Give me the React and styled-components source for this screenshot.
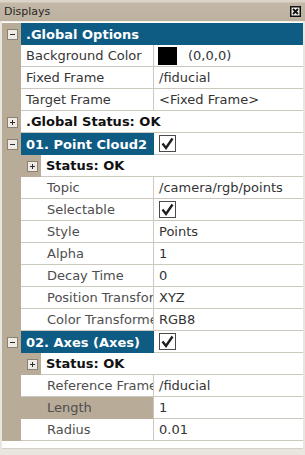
import React from 'react';
import styled, { createGlobalStyle } from 'styled-components';

const GlobalStyle = createGlobalStyle`
  html, body {
    margin: 0;
    padding: 0;
    background: #ece9e3;
  }
  body {
    font-family: "DejaVu Sans", "Liberation Sans", sans-serif;
    font-size: 13px;
  }
`;

const TAN = '#b8ab97';
const BLUE = '#0e5b83';
const GRID = '#cdc8bf';

const Dock = styled.div`
  width: 305px;
  height: 455px;
  display: flex;
  flex-direction: column;
  background: #e9e6e0;
  overflow: hidden;
`;

const TitleBar = styled.div`
  height: 21px;
  flex: none;
  box-sizing: border-box;
  display: flex;
  align-items: center;
  justify-content: space-between;
  padding: 2px 4px 0 4px;
  background: linear-gradient(#dcd4c8 0, #dcd4c8 2px, #c3b8a7 3px, #bcb19f 100%);
  color: #262626;
  font-size: 11px;
`;

const CloseButton = styled.span`
  display: flex;
  width: 11px;
  height: 11px;
  margin-top: -1px;
`;

const Tree = styled.div`
  flex: none;
  height: 428px;
  box-sizing: border-box;
  margin: 0 2px;
  padding-top: 1px;
  background: #fff;
  border-top: 1px solid #f2efea;
  border-bottom: 1px solid #d4d0c8;
`;

const Row = styled.div`
  display: flex;
  height: 22px;
`;

const Gutter = styled.div`
  flex: none;
  width: ${({ $w }) => $w}px;
  box-sizing: border-box;
  padding-left: ${({ $pad }) => $pad}px;
  display: flex;
  align-items: center;
  background: ${TAN};
`;

const Expander = styled.span`
  position: relative;
  width: 9px;
  height: 9px;
  border: 1px solid #8a8275;
  background: #efebe4;
  &::before {
    content: '';
    position: absolute;
    left: 2px;
    right: 2px;
    top: 4px;
    height: 1px;
    background: #2d2d2d;
  }
  &::after {
    content: '';
    display: ${({ $open }) => ($open ? 'none' : 'block')};
    position: absolute;
    top: 2px;
    bottom: 2px;
    left: 4px;
    width: 1px;
    background: #2d2d2d;
  }
`;

const Category = styled.div`
  flex: ${({ $fill }) => ($fill ? 1 : 'none')};
  width: ${({ $fill }) => ($fill ? 'auto' : '133px')};
  box-sizing: border-box;
  display: flex;
  align-items: center;
  padding-left: 5px;
  background: ${BLUE};
  color: #fff;
  font-weight: bold;
  white-space: nowrap;
  overflow: hidden;
`;

const StatusCell = styled.div`
  flex: 1;
  display: flex;
  align-items: center;
  padding-left: 5px;
  border-bottom: 1px solid ${GRID};
  color: #111;
  font-weight: bold;
  white-space: nowrap;
`;

const NameCell = styled.div`
  flex: none;
  width: 133px;
  box-sizing: border-box;
  display: flex;
  align-items: center;
  padding-left: ${({ $nested }) => ($nested ? 26 : 5)}px;
  border-right: 1px solid ${GRID};
  border-bottom: 1px solid ${({ $selected }) => ($selected ? TAN : GRID)};
  background: ${({ $selected }) => ($selected ? TAN : '#fff')};
  color: ${({ $nested }) => ($nested ? '#4e4e4e' : '#363636')};
  white-space: nowrap;
  overflow: hidden;
`;

const ValueCell = styled.div`
  flex: 1;
  display: flex;
  align-items: center;
  padding-left: 5px;
  border-bottom: 1px solid ${GRID};
  color: #333;
  white-space: nowrap;
  overflow: hidden;
`;

const Swatch = styled.span`
  width: 19px;
  height: 18px;
  margin-left: -1px;
  margin-right: 11px;
  background: #000;
`;

const CheckFrame = styled.span`
  display: flex;
  width: 17px;
  height: 17px;
`;

const Check = () => (
  <CheckFrame>
    <svg width="17" height="17" viewBox="0 0 17 17">
      <rect x="0.5" y="0.5" width="16" height="16" fill="#fff" stroke="#4a4a4a" />
      <path d="M3.5 8.5 L7 13 L13.5 3.5" fill="none" stroke="#1e1e1e" strokeWidth="2.4" strokeLinejoin="miter" />
    </svg>
  </CheckFrame>
);

const items = [
  { kind: 'category', label: '.Global Options', open: true },
  { kind: 'prop', name: 'Background Color', value: '(0,0,0)', swatch: true },
  { kind: 'prop', name: 'Fixed Frame', value: '/fiducial' },
  { kind: 'prop', name: 'Target Frame', value: '<Fixed Frame>' },
  { kind: 'status', label: '.Global Status: OK' },
  { kind: 'display', label: '01. Point Cloud2' },
  { kind: 'substatus', label: 'Status: OK' },
  { kind: 'prop', nested: true, name: 'Topic', value: '/camera/rgb/points' },
  { kind: 'prop', nested: true, name: 'Selectable', check: true },
  { kind: 'prop', nested: true, name: 'Style', value: 'Points' },
  { kind: 'prop', nested: true, name: 'Alpha', value: '1' },
  { kind: 'prop', nested: true, name: 'Decay Time', value: '0' },
  { kind: 'prop', nested: true, name: 'Position Transformer', value: 'XYZ' },
  { kind: 'prop', nested: true, name: 'Color Transformer', value: 'RGB8' },
  { kind: 'display', label: '02. Axes (Axes)' },
  { kind: 'substatus', label: 'Status: OK' },
  { kind: 'prop', nested: true, name: 'Reference Frame', value: '/fiducial' },
  { kind: 'prop', nested: true, name: 'Length', value: '1', selected: true },
  { kind: 'prop', nested: true, name: 'Radius', value: '0.01' },
];

const TreeRow = ({ item }) => {
  switch (item.kind) {
    case 'category':
      return (
        <Row>
          <Gutter $w={19} $pad={5}><Expander $open /></Gutter>
          <Category $fill>{item.label}</Category>
        </Row>
      );
    case 'status':
      return (
        <Row>
          <Gutter $w={19} $pad={5}><Expander /></Gutter>
          <StatusCell>{item.label}</StatusCell>
        </Row>
      );
    case 'display':
      return (
        <Row>
          <Gutter $w={19} $pad={5}><Expander $open /></Gutter>
          <Category>{item.label}</Category>
          <ValueCell><Check /></ValueCell>
        </Row>
      );
    case 'substatus':
      return (
        <Row>
          <Gutter $w={39} $pad={25}><Expander /></Gutter>
          <StatusCell>{item.label}</StatusCell>
        </Row>
      );
    default:
      return (
        <Row>
          <Gutter $w={19} />
          <NameCell $nested={item.nested} $selected={item.selected}>{item.name}</NameCell>
          <ValueCell>
            {item.swatch && <Swatch />}
            {item.check ? <Check /> : item.value}
          </ValueCell>
        </Row>
      );
  }
};

export default function App() {
  return (
    <>
      <GlobalStyle />
      <Dock>
        <TitleBar>
          <span>Displays</span>
          <CloseButton>
            <svg width="11" height="11" viewBox="0 0 11 11">
              <rect x="0.75" y="0.75" width="9.5" height="9.5" fill="#f4f1ec" stroke="#111" strokeWidth="1.5" />
              <path d="M3 3 L8 8 M8 3 L3 8" stroke="#111" strokeWidth="1.8" />
            </svg>
          </CloseButton>
        </TitleBar>
        <Tree>
          {items.map((item, i) => (
            <TreeRow key={i} item={item} />
          ))}
        </Tree>
      </Dock>
    </>
  );
}
